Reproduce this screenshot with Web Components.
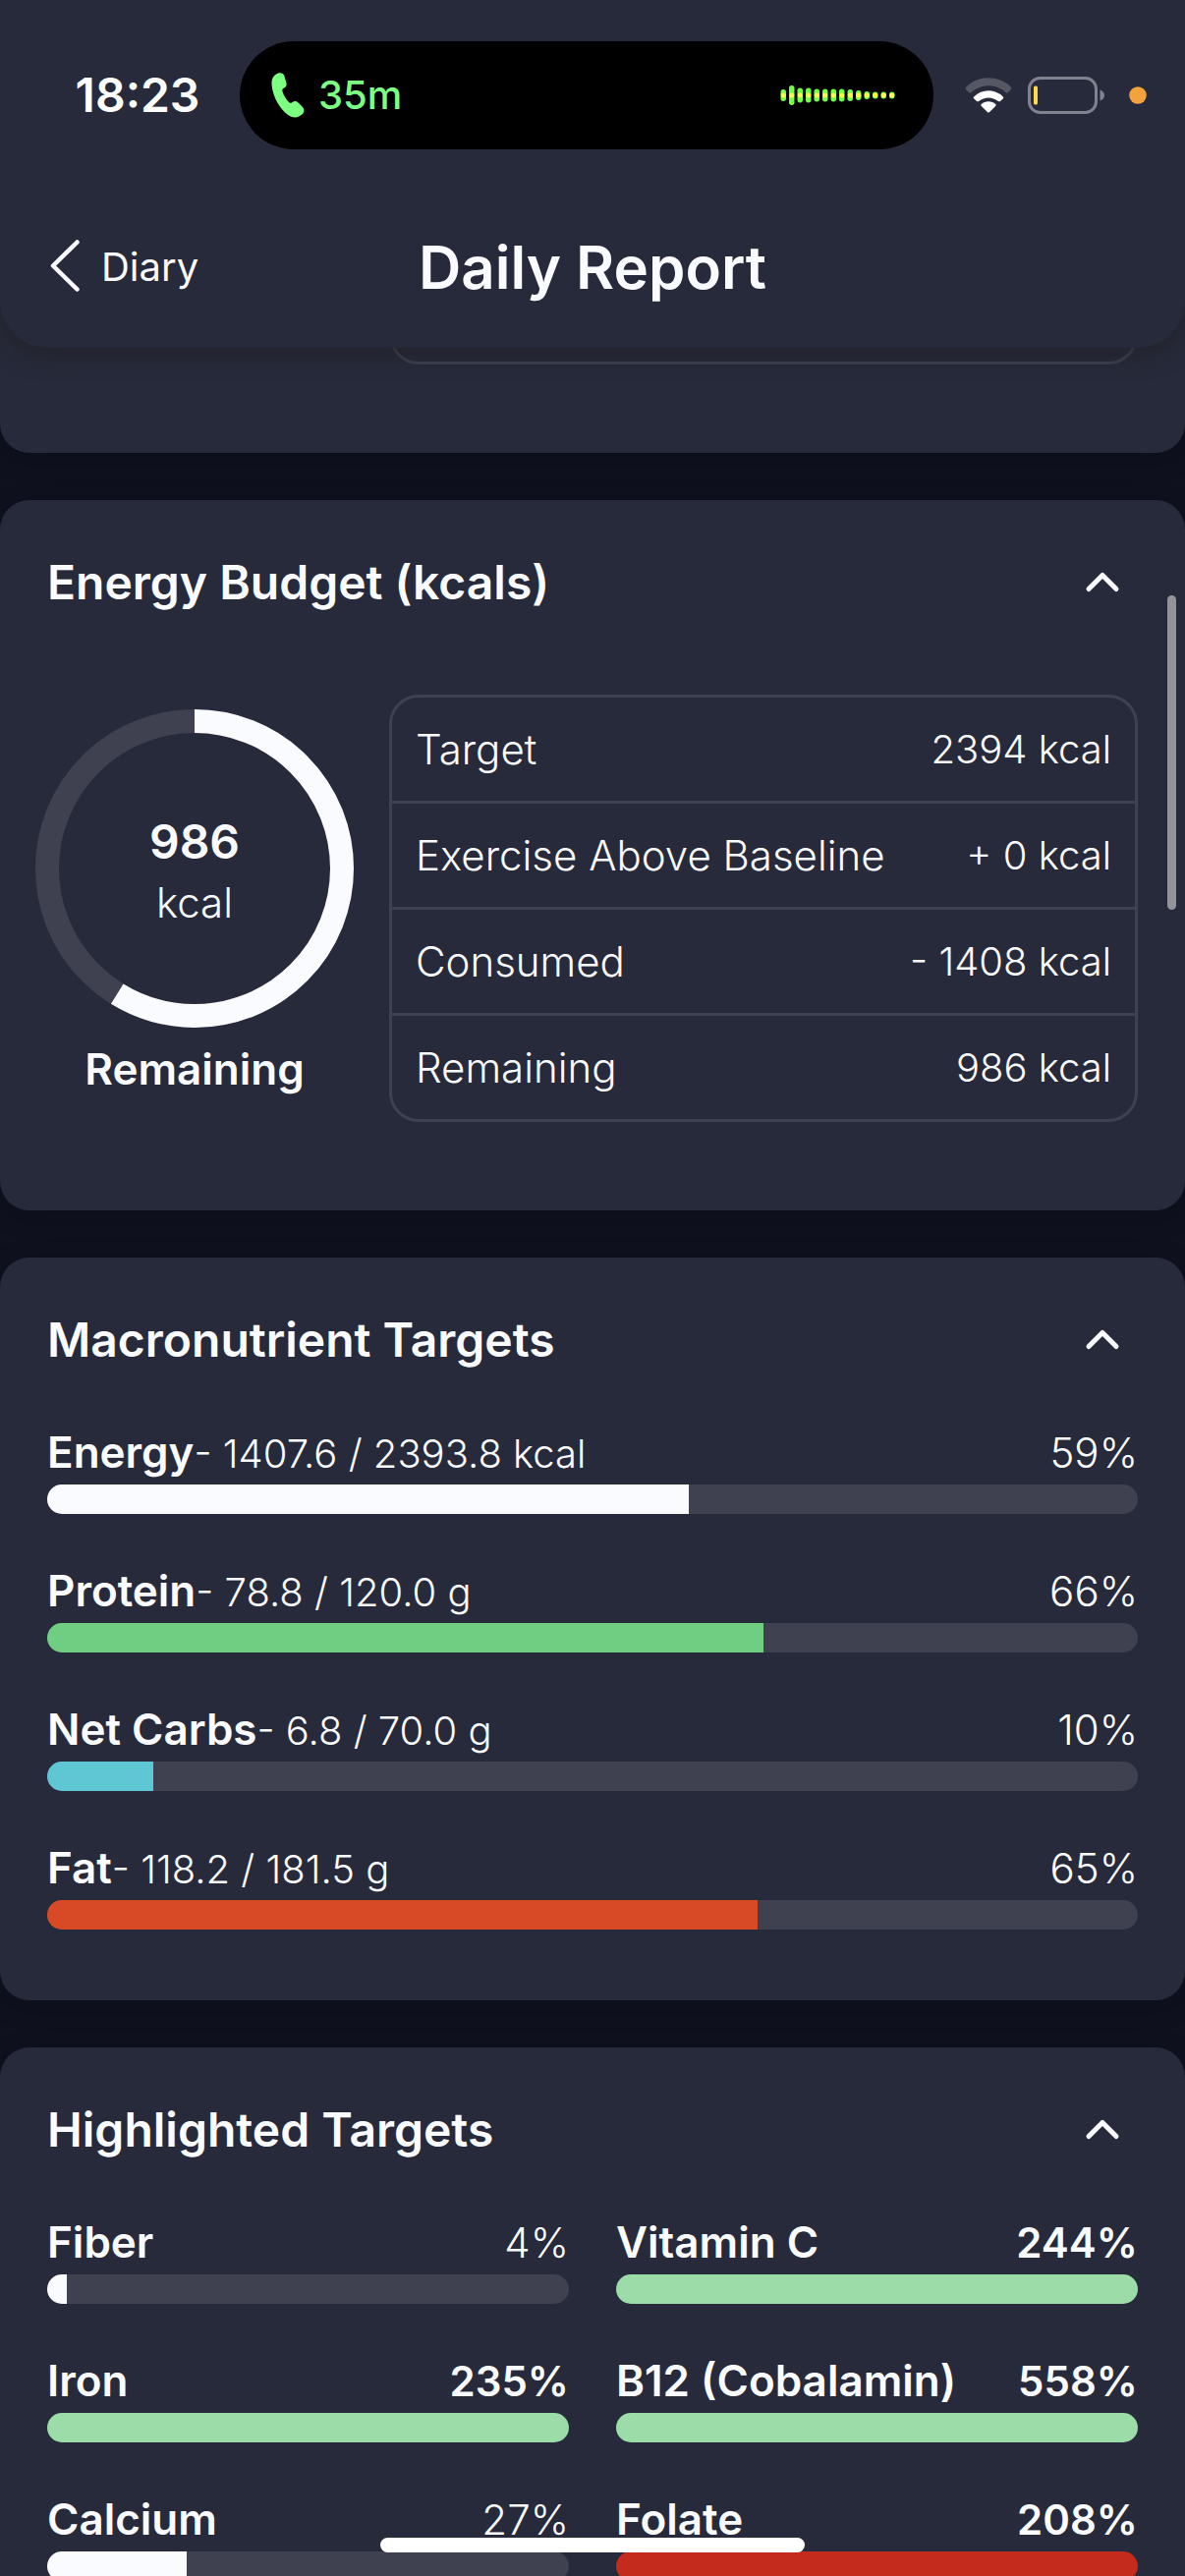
<!DOCTYPE html>
<html lang="en">
<head>
<meta charset="utf-8">
<meta name="viewport" content="width=device-width, initial-scale=1">
<title>Daily Report</title>
<style>
  :root {
    --page: #0f111f;
    --card: #272a3a;
    --track: #404150;
    --ink: #fafbff;
    --gap: 48px;
    --value-size: 40px;
    --label-size: 44px;
  }
  body {
    margin: 0;
    height: 100vh;
    overflow: hidden;
    background: var(--page);
    color: var(--ink);
    font-family: Inter, "Noto Sans", sans-serif;
    font-size: 42px;
    line-height: 60px;
  }
</style>
</head>
<body>
<daily-report></daily-report>

<script>
const define = (name, html, setup) => {
  const template = document.createElement('template');
  template.innerHTML = html;
  customElements.define(name, class extends HTMLElement {
    constructor() {
      super();
      this.attachShadow({ mode: 'open' }).append(template.content.cloneNode(true));
    }
    connectedCallback() {
      if (setup) setup(this, this.shadowRoot);
    }
  });
};

define('status-bar', `
  <style>
    :host { display: grid; grid-template-columns: 244px 1fr 256px; align-items: center; height: 110px; padding: 42px 0 38px; }
    time { padding-left: 36px; text-align: center; font-size: 48px; font-weight: 600; color: #fff; }
    .island { display: flex; align-items: center; justify-content: space-between; height: 110px; box-sizing: border-box; padding: 0 38px 0 32px; border-radius: 55px; background: #000; }
    .call { display: flex; align-items: center; gap: 14px; color: #7dff82; font-size: 40px; font-weight: 500; }
    .system { display: flex; align-items: center; justify-content: flex-end; padding-right: 39px; }
    svg { display: block; }
    .battery { margin: 0 24px 0 16px; }
  </style>
  <time>18:23</time>
  <div class="island">
    <div class="call">
      <svg width="34" height="46" viewBox="0 0 34 46" fill="#7dff82" aria-hidden="true"><path d="M7 .6C9.500-.4 12.500.4 13.300 3L15.500 11C16 13.200 15 14.500 13.200 15.400C11.600 16.200 11 17.400 11.500 19.200C12.800 23.400 15 27 18 30C19.300 31.200 20.400 31.100 21.600 30C23.500 28.400 25.600 28.600 27.200 30.200L32 35C34 37.300 33.800 40 31.600 42.300C27.300 46.500 21.500 46.300 16.500 42.500C8.500 36.200 2.500 25.800.8 14.500C-.2 7.500 1.500 2.700 7 .6Z"/></svg>
      <span>35m</span>
    </div>
    <svg width="118" height="24" viewBox="0 0 118 24" aria-hidden="true"><g class="bars"></g></svg>
  </div>
  <div class="system">
    <svg width="48" height="36" viewBox="0 0 48 36" aria-hidden="true">
      <path d="M1.600 12.800C.4 11.600.4 10.200 1.700 9C14-2.700 34-2.700 46.300 9C47.600 10.200 47.600 11.600 46.400 12.800L43.900 15.100C43.100 15.800 42.300 15.800 41.500 15.100C31.500 6 16.500 6 6.500 15.100C5.700 15.800 4.900 15.800 4.100 15.100Z" fill="#555765"/>
      <path d="M9.200 19.400C8.400 20.200 8.500 20.900 9.300 21.600L12 24C12.700 24.500 13.400 24.500 14.200 23.900C20 19.200 28 19.200 33.800 23.900C34.600 24.500 35.300 24.500 36 24L38.700 21.600C39.500 20.900 39.600 20.200 38.800 19.400C30.500 11.200 17.500 11.200 9.200 19.400Z" fill="#fff"/>
      <path d="M16.700 27.100C16.100 27.700 16.200 28.300 16.800 28.900L22.900 35C23.700 35.700 24.300 35.700 25.100 35L31.200 28.900C31.800 28.300 31.900 27.700 31.300 27.100C27.100 23.400 20.900 23.400 16.700 27.100Z" fill="#fff"/>
    </svg>
    <svg class="battery" width="79" height="38" viewBox="0 0 79 38" aria-hidden="true">
      <rect x="1.500" y="1.500" width="68" height="35" rx="11" fill="none" stroke="#808290" stroke-width="3"/>
      <rect x="6" y="9.500" width="4" height="19" rx="1.500" fill="#ffd94a"/>
      <path d="M73.500 13.500C79.500 15.500 79.500 22.500 73.500 24.500Z" fill="#808290"/>
    </svg>
    <svg width="18" height="18" viewBox="0 0 18 18" aria-hidden="true"><circle cx="9" cy="9" r="8.800" fill="#f2a33c"/></svg>
  </div>
`, (host, root) => {
  const heights = [12, 20, 15, 15, 13, 13, 13, 13, 12, 10, 8, 7, 7, 7];
  root.querySelector('.bars').innerHTML = heights.map((h, i) => {
    const x = 0.5 + i * 8.5;
    return `<rect x="${x}" y="${12 - h / 2}" width="5.500" height="${h}" rx="2.700" fill="#72ff45"/>` +
      `<circle cx="${x + 2.75}" cy="12" r="2.500" fill="#fdf84a"/>`;
  }).join('');
});

define('page-header', `
  <style>
    :host { display: block; position: relative; z-index: 1; background: var(--card); border-radius: 0 0 48px 48px; box-shadow: 0 6px 24px rgba(32, 32, 36, .7); }
    nav { display: grid; grid-template-columns: 1fr auto 1fr; align-items: center; height: 164px; padding: 0 48px; }
    a { display: flex; align-items: center; gap: 22px; justify-self: start; color: inherit; text-decoration: none; font-size: 40px; }
    h1 { margin: 0; font-size: 60px; font-weight: 600; }
    svg { display: block; }
  </style>
  <status-bar></status-bar>
  <nav>
    <a href="#diary">
      <svg width="33" height="56" viewBox="0 0 33 56" fill="none" stroke="currentColor" stroke-width="4.500" stroke-linecap="round" stroke-linejoin="round" aria-hidden="true"><path d="M30.500 2.500L6 26.500L30.500 50.500"/></svg>
      <span>Diary</span>
    </a>
    <h1><slot></slot></h1>
  </nav>
`);

define('report-card', `
  <style>
    :host { display: block; border-radius: 30px; background: var(--card); box-shadow: 0 6px 24px rgba(8, 9, 18, .3); }
    header { display: flex; align-items: center; justify-content: space-between; height: 168px; padding: 0 48px; }
    h2 { margin: 0; font-size: 48px; font-weight: 600; }
    button { display: grid; place-items: center; width: 72px; height: 72px; padding: 0; border: 0; background: none; color: inherit; }
    :host(:not([heading])) header { display: none; }
  </style>
  <header>
    <h2></h2>
    <button type="button" aria-expanded="true">
      <svg width="36" height="24" viewBox="0 0 36 24" fill="none" stroke="currentColor" stroke-width="5" stroke-linecap="round" stroke-linejoin="round" aria-hidden="true"><path d="M4 18.500L18 4.500L32 18.500"/></svg>
    </button>
  </header>
  <slot></slot>
`, (host, root) => {
  const heading = host.getAttribute('heading') || '';
  root.querySelector('h2').textContent = heading;
  root.querySelector('button').setAttribute('aria-label', 'Collapse ' + heading);
});

define('energy-ring', `
  <style>
    :host { display: flex; flex-direction: column; align-items: center; gap: 12px; width: 324px; }
    .dial { display: grid; place-items: center; }
    .dial > * { grid-area: 1 / 1; }
    svg { display: block; }
    .amount { padding-top: 8px; line-height: 62px; text-align: center; font-weight: 300; }
    .amount b { display: block; font-size: 48px; font-weight: 600; }
    .caption { font-size: var(--label-size); font-weight: 600; }
  </style>
  <div class="dial">
    <svg width="324" height="324" viewBox="0 0 324 324" fill="none" stroke-width="24" aria-hidden="true">
      <circle cx="162" cy="162" r="150" stroke="var(--track)"/>
      <circle class="arc" cx="162" cy="162" r="150" pathLength="100" stroke="var(--ink)" transform="rotate(-90 162 162)"/>
    </svg>
    <div class="amount"><b></b><span></span></div>
  </div>
  <div class="caption"><slot></slot></div>
`, (host, root) => {
  root.querySelector('.arc').setAttribute('stroke-dasharray', host.getAttribute('percent') + ' 100');
  root.querySelector('b').textContent = host.getAttribute('amount');
  root.querySelector('.amount span').textContent = host.getAttribute('unit');
});

define('budget-table', `
  <style>
    :host { display: block; flex: 1; box-sizing: border-box; min-height: 65px; border: 3px solid var(--track); border-radius: 30px; }
    table { width: 100%; border-collapse: separate; border-spacing: 0; font: inherit; }
    th, td { height: 105px; padding: 0 24px; font-weight: 300; text-align: left; white-space: nowrap; }
    td { padding-left: 0; font-size: var(--value-size); text-align: right; }
    tr + tr > * { border-top: 3px solid var(--track); }
  </style>
  <table><tbody></tbody></table>
`, (host, root) => {
  const body = root.querySelector('tbody');
  for (const line of JSON.parse(host.getAttribute('rows') || '[]')) {
    const row = body.insertRow();
    const name = document.createElement('th');
    name.scope = 'row';
    name.textContent = line[0];
    row.append(name);
    row.insertCell().textContent = line[1];
  }
});

define('nutrient-bar', `
  <style>
    :host { display: flex; flex-direction: column; gap: 3px; }
    .line { display: flex; justify-content: space-between; align-items: baseline; height: 60px; font-weight: 300; white-space: nowrap; }
    label { font-size: var(--value-size); }
    b { font-size: var(--label-size); font-weight: 600; }
    :host([over]) .percent { font-weight: 600; }
    progress { display: block; appearance: none; width: 100%; height: 30px; border: 0; border-radius: 15px; overflow: hidden; background: var(--track); }
    progress::-webkit-progress-bar { background: var(--track); }
    progress::-webkit-progress-value { background: var(--tone, var(--ink)); }
  </style>
  <div class="line">
    <label for="level"><b></b><slot></slot></label>
    <span class="percent"></span>
  </div>
  <progress id="level" max="100"></progress>
`, (host, root) => {
  root.querySelector('b').textContent = host.getAttribute('name');
  root.querySelector('.percent').textContent = host.getAttribute('percent') + '%';
  root.querySelector('progress').value = Math.min(100, host.getAttribute('level') || host.getAttribute('percent'));
  const tone = host.getAttribute('tone');
  if (tone) host.style.setProperty('--tone', tone);
});

define('daily-report', `
  <style>
    :host { display: flex; flex-direction: column; height: 100vh; overflow: hidden; }
    page-header { flex: none; }
    main { display: flex; flex-direction: column; gap: var(--gap); margin-top: -96px; min-height: 0; }
    report-card { flex: none; }
    .budget { display: flex; align-items: flex-start; gap: 36px; padding: 30px 48px 90px 36px; }
    .budget energy-ring { padding-top: 15px; }
    .tail { padding: 48px 48px 90px 396px; }
    .list { display: grid; gap: 48px; padding: 0 48px 72px; }
    .pair { grid-template-columns: 1fr 1fr; }
    .thumb { position: fixed; right: 9px; top: 606px; width: 9px; height: 320px; border-radius: 5px; background: #929499; }
    .home { position: fixed; left: 0; right: 0; bottom: 24px; width: 432px; height: 15px; margin: 0 auto; border-radius: 8px; background: #fff; }
  </style>
  <page-header>Daily Report</page-header>
  <main>
    <report-card><div class="tail"><budget-table></budget-table></div></report-card>
    <report-card heading="Energy Budget (kcals)">
      <div class="budget">
        <energy-ring percent="58.800" amount="986" unit="kcal">Remaining</energy-ring>
        <budget-table rows='[["Target","2394 kcal"],["Exercise Above Baseline","+ 0 kcal"],["Consumed","- 1408 kcal"],["Remaining","986 kcal"]]'></budget-table>
      </div>
    </report-card>
    <report-card heading="Macronutrient Targets">
      <div class="list">
        <nutrient-bar name="Energy" percent="59" level="58.800">- 1407.6 / 2393.8 kcal</nutrient-bar>
        <nutrient-bar name="Protein" percent="66" level="65.700" tone="#70ce83">- 78.8 / 120.0 g</nutrient-bar>
        <nutrient-bar name="Net Carbs" percent="10" level="9.700" tone="#5fc7d4">- 6.8 / 70.0 g</nutrient-bar>
        <nutrient-bar name="Fat" percent="65" level="65.100" tone="#d84a26">- 118.2 / 181.5 g</nutrient-bar>
      </div>
    </report-card>
    <report-card heading="Highlighted Targets">
      <div class="list pair">
        <nutrient-bar name="Fiber" percent="4" level="3.800"></nutrient-bar>
        <nutrient-bar name="Vitamin C" percent="244" over tone="#9bdca8"></nutrient-bar>
        <nutrient-bar name="Iron" percent="235" over tone="#9bdca8"></nutrient-bar>
        <nutrient-bar name="B12 (Cobalamin)" percent="558" over tone="#9bdca8"></nutrient-bar>
        <nutrient-bar name="Calcium" percent="27" level="26.700"></nutrient-bar>
        <nutrient-bar name="Folate" percent="208" over tone="#c52b1c"></nutrient-bar>
      </div>
    </report-card>
  </main>
  <div class="thumb"></div>
  <div class="home"></div>
`);
</script>
</body>
</html>
